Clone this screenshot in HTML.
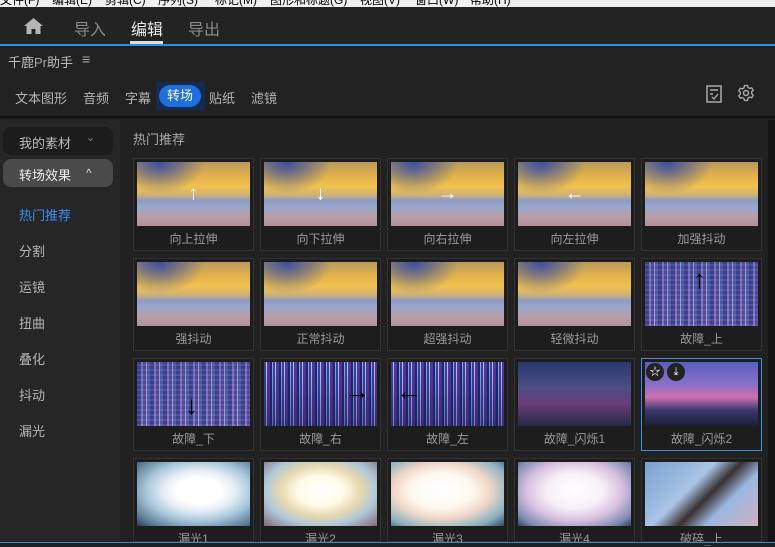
<!DOCTYPE html>
<html><head><meta charset="utf-8"><style>
*{margin:0;padding:0;box-sizing:border-box}
body{width:775px;height:545px;overflow:hidden;background:#1f1f1f;font-family:"Liberation Sans","Noto Sans CJK SC",sans-serif;position:relative;color:#ccc}
.menu{position:absolute;left:0;top:0;width:775px;height:7px;background:#f0f0f0;overflow:hidden}
.menu span{position:absolute;top:-9px;font-size:12px;color:#000}
.top{position:absolute;top:7px;left:0;width:775px;height:39px;background:#232323;border-bottom:2px solid #2d8ceb}
.top .t{position:absolute;top:9px;font-size:16px;color:#8a8a8a}
.panel{position:absolute;top:48px;left:0;width:775px;height:70px;background:#222;border-bottom:2px solid #111}
.side{position:absolute;top:120px;left:0;width:120px;height:422px;background:#262626}
.content{position:absolute;top:120px;left:120px;width:648px;height:422px;background:#212121}
.sb{position:absolute;top:120px;left:768px;width:7px;height:422px;background:#141414}
.bot{position:absolute;top:542px;left:0;width:775px;height:3px;background:#1f1f1f;border-top:1px solid #2d8ceb}
.card{position:absolute;width:121px;height:93px;background:#1d1d1d;border:1px solid #333}
.card.sel{border-color:#3b8fe0}
.img{position:absolute;left:3px;top:3px;width:113px;height:64px;overflow:hidden}
.lab{position:absolute;left:0;right:0;top:71px;text-align:center;font-size:12px;color:#9a9a9a}
.sea{background:radial-gradient(ellipse at 20% 0%,#3a4f9f 0%,rgba(58,79,159,0) 35%),linear-gradient(180deg,#b89a60 0%,#e0b04c 20%,#f1c24e 38%,#cdb07a 52%,#8d9bc4 60%,#9aa7cc 70%,#b89ea8 85%,#b39195 100%)}
.gl{background:linear-gradient(180deg,rgba(60,60,140,.4),rgba(80,60,140,.3)),repeating-linear-gradient(0deg,rgba(255,255,255,.15) 0 2px,rgba(0,0,0,0) 2px 5px),repeating-linear-gradient(90deg,#3b3f8a 0 4px,#8c8fe0 4px 6px,#5a4a9c 6px 9px,#c6c9f0 9px 10px,#4d6ab0 10px 13px)}
.gl2{background:linear-gradient(180deg,rgba(40,40,120,.1),rgba(30,30,80,.5)),repeating-linear-gradient(90deg,#3347a8 0 2px,#d3d8ff 2px 3px,#5b36a6 3px 6px,#1a2a6a 6px 8px,#9fb3ff 8px 9px)}
.city{background:linear-gradient(180deg,#2a3a6c 0%,#4a4d86 40%,#6a3d7a 65%,#252a45 100%)}
.city2{background:linear-gradient(180deg,#5560c0 0%,#8a70c8 35%,#d070b0 55%,#3a3a70 75%,#1a1f35 100%)}
.leak{background:radial-gradient(ellipse at 55% 45%,#fff 0%,#fff 25%,#e8eef5 40%,#a8c8dc 60%,#5a7a98 85%,#2a3a55 100%)}
.leak2{background:radial-gradient(ellipse at 50% 45%,#fff 0%,#fffbe8 30%,#e8d8b0 50%,#b0c8d8 70%,#806878 100%)}
.brk{background:linear-gradient(135deg,#7aa0d0 0%,#a9c4e6 40%,#3a3030 55%,#9ab8e0 70%,#d0b0c0 100%)}
.arr{position:absolute;color:#fff;font-size:20px;font-weight:bold;left:50%;top:50%;transform:translate(-50%,-50%)}
.arrb{position:absolute;color:#000;font-size:26px;font-weight:bold}
.si{position:absolute;left:19px;font-size:13px;color:#b5b5b5}
</style></head><body>
<div class="menu"><span style="left:0">文件(F)</span><span style="left:52px">编辑(E)</span><span style="left:105px">剪辑(C)</span><span style="left:158px">序列(S)</span><span style="left:215px">标记(M)</span><span style="left:270px">图形和标题(G)</span><span style="left:360px">视图(V)</span><span style="left:415px">窗口(W)</span><span style="left:470px">帮助(H)</span></div>
<div class="top">
<svg style="position:absolute;left:24px;top:11px" width="19" height="16" viewBox="0 0 19 16"><path d="M9.5 0L0 8h2.5v8h5v-5h4v5h5V8H19z" fill="#b5b5b5"/></svg>
<span class="t" style="left:74px">导入</span>
<span class="t" style="left:131px;color:#e8e8e8">编辑</span>
<div style="position:absolute;left:130px;top:34px;width:33px;height:3px;background:#ddd"></div>
<span class="t" style="left:188px">导出</span>
</div>
<div class="panel">
<span style="position:absolute;left:8px;top:4px;font-size:13px;color:#bbb">千鹿<span style="color:#9ab">Pr</span>助手</span>
<span style="position:absolute;left:82px;top:3px;font-size:14px;color:#aaa">≡</span>
<span style="position:absolute;left:15px;top:40px;font-size:13px;color:#b5b5b5">文本图形</span>
<span style="position:absolute;left:83px;top:40px;font-size:13px;color:#b5b5b5">音频</span>
<span style="position:absolute;left:125px;top:40px;font-size:13px;color:#b5b5b5">字幕</span>
<div style="position:absolute;left:156px;top:34px;width:49px;height:28px;background:#152a50"></div>
<div style="position:absolute;left:159px;top:37px;width:42px;height:22px;background:#1f6fdc;border-radius:11px;color:#fff;font-size:13px;text-align:center;line-height:22px">转场</div>
<span style="position:absolute;left:209px;top:40px;font-size:13px;color:#b5b5b5">贴纸</span>
<span style="position:absolute;left:251px;top:40px;font-size:13px;color:#b5b5b5">滤镜</span>
<svg style="position:absolute;left:706px;top:37px" width="16" height="18" viewBox="0 0 16 18"><rect x="1" y="1" width="14" height="16" fill="none" stroke="#aaa" stroke-width="1.5"/><path d="M4 5h8M4 9h3M6 12l2 2 4-5" stroke="#aaa" stroke-width="1.4" fill="none"/></svg>
<svg style="position:absolute;left:737px;top:36px" width="18" height="18" viewBox="0 0 24 24"><circle cx="12" cy="12" r="3.3" fill="none" stroke="#aaa" stroke-width="2"/><path d="M10 2h4l.7 2.6 2.3 1.3 2.6-.8 2 3.4-2 1.9v2.6l2 1.9-2 3.4-2.6-.8-2.3 1.3L14 22h-4l-.7-2.6-2.3-1.3-2.6.8-2-3.4 2-1.9v-2.6l-2-1.9 2-3.4 2.6.8 2.3-1.3z" fill="none" stroke="#aaa" stroke-width="1.8" stroke-linejoin="round"/></svg>
</div>
<div class="side">
<div style="position:absolute;left:3px;top:7px;width:110px;height:28px;background:#1c1c1c;border-radius:8px"></div>
<span class="si" style="top:13px;color:#bbb">我的素材</span><span style="position:absolute;left:86px;top:11px;font-size:11px;color:#888">⌄</span>
<div style="position:absolute;left:3px;top:39px;width:110px;height:28px;background:#4a4a4a;border-radius:8px"></div>
<span class="si" style="top:45px;color:#eee">转场效果</span><span style="position:absolute;left:86px;top:46px;font-size:12px;color:#ddd">^</span>
<span class="si" style="top:85px;color:#3a8ef0">热门推荐</span>
<span class="si" style="top:121px">分割</span>
<span class="si" style="top:157px">运镜</span>
<span class="si" style="top:193px">扭曲</span>
<span class="si" style="top:229px">叠化</span>
<span class="si" style="top:265px">抖动</span>
<span class="si" style="top:301px">漏光</span>
</div>
<div class="content">
<span style="position:absolute;left:13px;top:9px;font-size:13px;color:#aaa">热门推荐</span>
</div>
<div class="sb"></div>
<div class="card" style="left:133px;top:158px"><div class="img sea"><span class="arr">↑</span></div><div class="lab">向上拉伸</div></div>
<div class="card" style="left:260px;top:158px"><div class="img sea"><span class="arr">↓</span></div><div class="lab">向下拉伸</div></div>
<div class="card" style="left:387px;top:158px"><div class="img sea"><span class="arr">→</span></div><div class="lab">向右拉伸</div></div>
<div class="card" style="left:514px;top:158px"><div class="img sea"><span class="arr">←</span></div><div class="lab">向左拉伸</div></div>
<div class="card" style="left:641px;top:158px"><div class="img sea"></div><div class="lab">加强抖动</div></div>
<div class="card" style="left:133px;top:258px"><div class="img sea"></div><div class="lab">强抖动</div></div>
<div class="card" style="left:260px;top:258px"><div class="img sea"></div><div class="lab">正常抖动</div></div>
<div class="card" style="left:387px;top:258px"><div class="img sea"></div><div class="lab">超强抖动</div></div>
<div class="card" style="left:514px;top:258px"><div class="img sea"></div><div class="lab">轻微抖动</div></div>
<div class="card" style="left:641px;top:258px"><div class="img gl"><span class="arrb" style="left:48px;top:2px">↑</span></div><div class="lab">故障_上</div></div>
<div class="card" style="left:133px;top:358px"><div class="img gl"><span class="arrb" style="left:48px;top:28px">↓</span></div><div class="lab">故障_下</div></div>
<div class="card" style="left:260px;top:358px"><div class="img gl2"><span class="arrb" style="left:80px;top:14px">→</span></div><div class="lab">故障_右</div></div>
<div class="card" style="left:387px;top:358px"><div class="img gl2"><span class="arrb" style="left:5px;top:14px">←</span></div><div class="lab">故障_左</div></div>
<div class="card" style="left:514px;top:358px"><div class="img city"></div><div class="lab">故障_闪烁1</div></div>
<div class="card sel" style="left:641px;top:358px"><div class="img city2">
<div style="position:absolute;left:1px;top:1px;width:18px;height:18px;border-radius:9px;background:#222;color:#fff;font-size:11px;text-align:center;line-height:18px">☆</div>
<div style="position:absolute;left:22px;top:1px;width:18px;height:18px;border-radius:9px;background:#222;color:#fff;font-size:11px;text-align:center;line-height:18px">⤓</div>
</div><div class="lab">故障_闪烁2</div></div>
<div class="card" style="left:133px;top:458px;height:84px"><div class="img leak"></div><div class="lab">漏光1</div></div>
<div class="card" style="left:260px;top:458px;height:84px"><div class="img leak2"></div><div class="lab">漏光2</div></div>
<div class="card" style="left:387px;top:458px;height:84px"><div class="img leak2" style="background:radial-gradient(ellipse at 45% 45%,#fff 0%,#fff8f0 35%,#f0d8c8 55%,#8ab0c0 80%,#304a60 100%)"></div><div class="lab">漏光3</div></div>
<div class="card" style="left:514px;top:458px;height:84px"><div class="img leak" style="background:radial-gradient(ellipse at 50% 45%,#fff 0%,#f8f0f8 35%,#d8c0e0 60%,#7a8ab0 85%,#304060 100%)"></div><div class="lab">漏光4</div></div>
<div class="card" style="left:641px;top:458px;height:84px"><div class="img brk"></div><div class="lab">破碎_上</div></div>
<div class="bot"></div>
</body></html>
